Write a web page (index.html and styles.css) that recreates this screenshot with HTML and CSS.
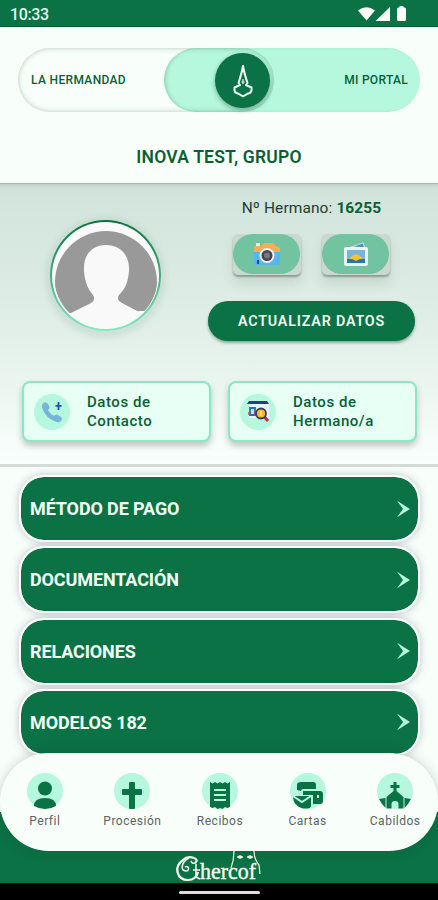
FILE: index.html
```html
<!DOCTYPE html>
<html lang="es">
<head>
<meta charset="utf-8">
<title>Mi portal</title>
<link rel="stylesheet" href="styles.css">
</head>
<body>
<div class="phone">
  <header class="status">
    <span class="clock">10:33</span>
    <svg class="signals" width="52" height="18" viewBox="0 0 52 18" fill="#fafffa"><path d="M0 5.500Q8.500-1 17 5.500L8.500 15.500z"/><path d="M32 2v14H17.500z"/><path d="M41.500 1h4v1.500h1q1.500 0 1.500 1.500v10.500q0 1.500-1.500 1.500h-6q-1.500 0-1.500-1.500V4q0-1.500 1.500-1.500h1z"/></svg>
  </header>

  <div class="switch">
    <div class="side side-right">MI PORTAL</div>
    <div class="side side-left">LA HERMANDAD</div>
    <div class="knob">
      <svg width="22" height="36" viewBox="0 0 22 36" fill="none" stroke="#f5fff5" stroke-width="2" stroke-linejoin="round"><path d="M11 4C10 10 8.500 15 6.500 21L8 23 2.500 25.500Q2 30 4.500 31L7 32 11 34.500 15 32 17.500 31Q20 30 19.500 25.500L14 23 15.500 21C13.500 15 12 10 11 4z"/><path d="M11 17v5M9.500 20h3" stroke-width="1.200"/></svg>
    </div>
  </div>

  <h1 class="name">INOVA TEST, GRUPO</h1>

  <section class="profile">
    <div class="summary">
      <div class="avatar">
        <svg width="104" height="104" viewBox="0 0 104 104"><defs><clipPath id="face"><circle cx="52" cy="58" r="51"/></clipPath></defs><g clip-path="url(#face)"><path fill="#999" d="M0 0H104V87H88L17 89H0z"/><path fill="#f9f9f9" d="M52 21C37 21 29 32 30 47C31 60 35 66 39 71Q42 76 37 79L15 90V110H89V90L68 79Q62 76 65 71C70 66 74 60 75 47C76 32 67 21 52 21z"/></g></svg>
      </div>
      <div class="actions">
        <p class="member">Nº Hermano: <b>16255</b></p>
        <div class="photos">
          <div class="photo"><span class="pill">
            <svg width="28" height="24" viewBox="0 0 28 24"><path fill="#55b7ea" d="M1 9h26v12q0 2-2 2H3q-2 0-2-2z"/><path fill="#f6ad55" d="M1 10V5q0-1 2-1h5l3-3h9l3 3 4 2v4z"/><path fill="#e8f4ee" d="M3 1h4v3H3z"/><circle cx="14" cy="13.500" r="7.500" fill="#f3f1f4"/><circle cx="14" cy="13.500" r="5.500" fill="#444653"/><circle cx="14" cy="13.500" r="3" fill="#777683"/><path d="M5 18v4" stroke="#245176" stroke-width="2"/></svg>
          </span></div>
          <div class="photo"><span class="pill">
            <svg width="28" height="26" viewBox="0 0 28 26"><path d="M9 6L21 2l2 5z" fill="#4b91bb" stroke="#b9dce0" stroke-width="1.300"/><rect x="2" y="6" width="24" height="19" rx="2" fill="#edf4f8"/><path fill="#77b5dc" d="M5 9h18v13H5z"/><path fill="#f4c42e" d="M7 18l3-3 4-2 4 2 3 3z"/><path fill="#2179ad" d="M5 18h18v4H5z"/><path d="M10 18h8l-4 2z" fill="#f0bd38"/></svg>
          </span></div>
        </div>
        <div class="update">ACTUALIZAR DATOS</div>
      </div>
    </div>
    <div class="cards">
      <div class="card"><span class="badge">
        <svg width="22" height="22" viewBox="0 0 22 22"><path fill="#78b3dc" d="M2.500 2Q5 0 7 3L8.500 6Q9 7.500 7 9Q9 13 13 15Q14.500 13 16 13.500L20 16Q22 17.500 20 20Q18 22 14 20.500Q5 17 1.500 8Q0 4 2.500 2z"/><path d="M17.500 1v8M14.500 4.800h6" stroke="#1b4ebb" stroke-width="1.800"/></svg>
      </span><span class="label">Datos de<br>Contacto</span></div>
      <div class="card"><span class="badge">
        <svg width="24" height="24" viewBox="0 0 24 24"><path fill="#e9f0ff" d="M3 3h20v15H3z"/><path fill="#233d83" d="M3 1h18l2 3H1z"/><path d="M4 8h5v7H4z" fill="#b9e3fa" stroke="#2271ac" stroke-width="1.800"/><path d="M3 12v3M9 12v3" stroke="#c94163" stroke-width="1.500"/><path d="M18.500 17l3.500 4" stroke="#c22b55" stroke-width="3"/><circle cx="15" cy="13.500" r="5" fill="#fbb536" stroke="#34404d" stroke-width="1.800"/><path d="M15 11v5" stroke="#fcdd67" stroke-width="2"/></svg>
      </span><span class="label">Datos de<br>Hermano/a</span></div>
    </div>
  </section>

  <main class="menu">
    <div class="row">MÉTODO DE PAGO<svg class="arrow" viewBox="0 0 14 18"><path d="M0 0L14 9 0 18 6.500 9z"/></svg></div>
    <div class="row">DOCUMENTACIÓN<svg class="arrow" viewBox="0 0 14 18"><path d="M0 0L14 9 0 18 6.500 9z"/></svg></div>
    <div class="row">RELACIONES<svg class="arrow" viewBox="0 0 14 18"><path d="M0 0L14 9 0 18 6.500 9z"/></svg></div>
    <div class="row">MODELOS 182<svg class="arrow" viewBox="0 0 14 18"><path d="M0 0L14 9 0 18 6.500 9z"/></svg></div>
  </main>

  <footer class="bottom">
    <nav class="tabs">
      <div class="tab"><svg class="tab-icon" viewBox="0 0 36 36"><circle class="disc" cx="18" cy="18" r="18"/><circle cx="18" cy="15.500" r="7"/><path d="M7 33Q7 25 18 25Q29 25 29 33Q18 39 7 33z"/></svg>Perfil</div>
      <div class="tab"><svg class="tab-icon" viewBox="0 0 36 36"><circle class="disc" cx="18" cy="18" r="18"/><path d="M16 9h4q1 0 1 1v6h6q1 0 1 1v4q0 1-1 1h-6v13q0 1-1 1h-4q-1 0-1-1V22H9q-1 0-1-1v-4q0-1 1-1h6v-6q0-1 1-1z"/></svg>Procesión</div>
      <div class="tab"><svg class="tab-icon" viewBox="0 0 36 36"><circle class="disc" cx="18" cy="18" r="18"/><path d="M8 9l2.500 1.500L13 9l2.500 1.500L18 9l2.500 1.500L23 9l2.500 1.500L28 9v25l-2.500 1-2.500-1-2.500 2-2.500-1-2.500 1-2.500-2-2.500 1L8 34z"/><path class="cut" d="M12 17h12M12 22h12M12 27h12"/></svg>Recibos</div>
      <div class="tab"><svg class="tab-icon" viewBox="0 0 36 36"><circle class="disc" cx="18" cy="18" r="18"/><path d="M7 17v-5q0-3 4-3h12q3 0 3 3v4H13q-2 0-2 2zM13 18h17q3 0 3 3v7q0 3-3 3h-7V22H13zM3 23h18v10q0 2-4 2.500H13Q3 33 3 23z"/><path class="cut" d="M3 23l9 6 9-6M28 22v3"/></svg>Cartas</div>
      <div class="tab"><svg class="tab-icon" viewBox="0 0 36 36"><circle class="disc" cx="18" cy="18" r="18"/><path d="M16.500 9h3v3h3v3h-3v3l7 6v11.500h-5V31q0-3-3.500-3t-3.500 3v4.500h-5V24l7-6v-3h-3v-3h3zM8.500 25v10L5 31l-3-5zM27.500 25v10l3.500-4 3-5z"/></svg>Cabildos</div>
    </nav>
    <svg class="brand" width="94" height="32" viewBox="0 0 94 32" fill="none" stroke="#f4fbec"><path d="M23 12C29 8 17 3 11 9C1 16 5 29 16 29C21 29 25 26 26 21" stroke-width="2.200"/><path d="M17 7C9 11 8 20 14 20C18 20 17 14 13 16M23 12q-3 1-4-2M24 13v13l4 2M21 19h7" stroke-width="1.500"/><text class="brand-text" x="28" y="28" textLength="56" lengthAdjust="spacingAndGlyphs">hercof</text><path d="M62 0Q62 9 59 17M82 0Q82 8 87 14L88 23" stroke-width="1.200"/><path d="M65 6q3-3 6 0-3 3-6 0zM75 6q3-3 6 0-3 3-6 0z" fill="#f4fbec" stroke="#f4fbec" stroke-width=".6"/></svg>
  </footer>
  <div class="system"><span class="handle"></span></div>
</div>
</body>
</html>
```
FILE: styles.css
```css
* { box-sizing: border-box; }
body { margin: 0; }
.phone {
  width: 438px;
  height: 900px;
  overflow: hidden;
  display: flex;
  flex-direction: column;
  background: #f8fffb;
  color: #0a6034;
  font-family: Roboto, "Liberation Sans", sans-serif;
}
.phone > * { flex-shrink: 0; }
.status {
  height: 27px;
  padding: 2px 28px 0 10px;
  display: flex;
  align-items: center;
  justify-content: space-between;
  background: #0b7245;
  border-bottom: 1px solid #066025;
}
.clock { color: #e2f5e8; font-size: 16px; font-weight: 500; letter-spacing: -.4px; }
.switch {
  height: 64px;
  margin: 21px 18px 0;
  display: grid;
  grid-template-columns: 146px 110px 146px;
  align-items: center;
  font-size: 12px;
  font-weight: 500;
}
.side { grid-row: 1; height: 64px; display: flex; align-items: center; border-radius: 32px; }
.side-left {
  grid-column: 1 / 3;
  padding-left: 13px;
  letter-spacing: .34px;
  box-shadow: inset 0 0 5px rgba(40, 80, 65, .34);
}
.side-right {
  grid-column: 2 / 4;
  justify-content: flex-end;
  padding-right: 12px;
  background: #b5f8dd;
  letter-spacing: .3px;
  box-shadow: inset 3px 0 4px -2px rgba(40, 80, 65, .3);
}
.knob {
  grid-column: 2;
  grid-row: 1;
  justify-self: end;
  width: 55px;
  height: 55px;
  margin-right: 4px;
  display: grid;
  place-items: center;
  border-radius: 50%;
  background: #0b7245;
  box-shadow: 0 2px 5px rgba(0, 60, 30, .4);
}
.name {
  height: 72px;
  margin: 0;
  padding-top: 18px;
  text-align: center;
  font-size: 17.5px;
  line-height: 54px;
  font-weight: 600;
  letter-spacing: .2px;
  border-bottom: 1px solid #aab8b1;
}
.profile {
  height: 283px;
  background: linear-gradient(rgba(70, 95, 82, .14), transparent 4px), linear-gradient(#d0e3da, #e2f0e9 55%, #fafffd);
  border-bottom: 3px solid #d5dbd8;
}
.summary { height: 197px; display: flex; }
.avatar {
  width: 111px;
  height: 111px;
  margin: 36px 0 0 50px;
  padding: 1.5px;
  border: 2px solid transparent;
  border-radius: 50%;
  background: linear-gradient(#fafafa, #fafafa) padding-box, linear-gradient(#08713a, #83e9c4) border-box;
  box-shadow: 0 2px 5px 5px rgba(145, 180, 166, .22);
}
.avatar svg { display: block; border-radius: 50%; }
.actions { width: 207px; margin-left: 47px; display: flex; flex-direction: column; align-items: center; }
.member { margin: 14px 0 15px; font-size: 15.5px; line-height: 21px; color: #263c32; letter-spacing: .1px; }
.member b { color: #0a6034; font-weight: 700; }
.photos { display: flex; gap: 21px; }
.photo { width: 68px; height: 41px; background: #cbd7d1; border-radius: 5px; box-shadow: 0 2px 2px rgba(60, 85, 72, .45), 0 9px 12px rgba(60, 85, 72, .13); }
.pill { width: 67px; height: 40px; border-radius: 20px; background: #72c39f; display: grid; place-items: center; }
.update {
  width: 207px;
  height: 40px;
  margin-top: 26px;
  border-radius: 20px;
  background: #0b7245;
  color: #effff4;
  text-align: center;
  font-size: 14.3px;
  line-height: 40px;
  font-weight: 600;
  letter-spacing: .83px;
  box-shadow: 0 2px 3px rgba(0, 60, 30, .4);
}
.cards { display: flex; gap: 17px; margin-left: 22px; }
.card {
  width: 189px;
  height: 61px;
  padding-left: 10px;
  display: flex;
  align-items: center;
  border: 2px solid #88e9c2;
  border-radius: 8px;
  background: #e7fff4;
  box-shadow: 0 4px 6px rgba(50, 70, 60, .28);
}
.badge { width: 36px; height: 36px; margin-right: 17px; display: grid; place-items: center; border-radius: 50%; background: #b5f8dd; }
.label { font-size: 15px; line-height: 19px; font-weight: 500; letter-spacing: .55px; }
.menu { height: 286px; padding: 8px 18px 0 19px; display: grid; grid-template-rows: repeat(4, 67px); row-gap: 4.3px; }
.row {
  padding: 0 8px 0 9px;
  display: flex;
  align-items: center;
  justify-content: space-between;
  border: 2px solid #fafffc;
  border-radius: 25px;
  background: #0b7245;
  background-clip: padding-box;
  color: #f2fff5;
  font-size: 18px;
  font-weight: 700;
  letter-spacing: -.12px;
  box-shadow: 0 0 9px rgba(60, 50, 75, .3);
}
.arrow { width: 13px; height: 18px; fill: #b5f8dd; }
.bottom {
  position: relative;
  height: 130px;
  display: flex;
  flex-direction: column;
  align-items: center;
  background: linear-gradient(transparent 59px, #0b7245 59px);
}
.tabs {
  width: 438px;
  height: 98px;
  padding: 20px 0 0 1px;
  display: grid;
  grid-template-columns: repeat(5, 87.6px);
  border-radius: 49px;
  background: #f8fffb;
  box-shadow: 0 0 12px rgba(20, 50, 35, .22);
}
.tab { display: flex; flex-direction: column; align-items: center; gap: 4px; font-size: 12px; line-height: 16px; color: #59645e; letter-spacing: .5px; }
.tab-icon { width: 36px; height: 36px; fill: #0b7245; }
.disc { fill: #b5f8dd; }
.cut { fill: none; stroke: #b5f8dd; stroke-width: 2; }
.brand-text { fill: #f4fbec; stroke: #f4fbec; stroke-width: .4px; font-family: "Liberation Serif", serif; font-size: 23px; }
.system { height: 18px; background: #000; display: flex; align-items: center; justify-content: center; }
.handle { width: 81px; height: 3px; border-radius: 2px; background: #ddd; }
```
